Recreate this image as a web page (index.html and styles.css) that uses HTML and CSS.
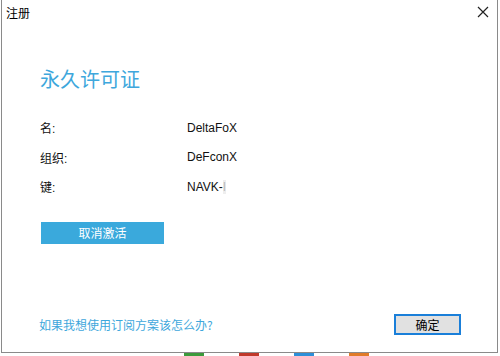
FILE: index.html
```html
<!DOCTYPE html>
<html lang="zh-CN">
<head>
    <meta charset="UTF-8">
    <title>注册</title>
    <link rel="stylesheet" href="styles.css">
</head>
<body>
    <div class="window">
        <div class="title-bar">
            <span class="title">注册</span>
            <svg class="close" width="12" height="12" viewBox="0 0 12 12">
                <path d="M1 1 L11 11 M11 1 L1 11" stroke="#222" stroke-width="1.2" fill="none"/>
            </svg>
        </div>

        <div class="content">
            <h1 class="heading">永久许可证</h1>

            <div class="info">
                <div class="info-row">
                    <span class="label">名:</span>
                    <span class="value">DeltaFoX</span>
                </div>
                <div class="info-row">
                    <span class="label">组织:</span>
                    <span class="value">DeFconX</span>
                </div>
                <div class="info-row">
                    <span class="label">键:</span>
                    <span class="value">NAVK-<span class="masked">I</span></span>
                </div>
            </div>

            <button class="deactivate-button">取消激活</button>
        </div>

        <div class="footer">
            <a class="subscription-link" href="#">如果我想使用订阅方案该怎么办?</a>
            <button class="ok-button">确定</button>
        </div>
    </div>

    <!-- Desktop behind the dialog -->
    <div class="desktop">
        <span class="icon-bit green"></span>
        <span class="icon-bit red"></span>
        <span class="icon-bit blue"></span>
        <span class="icon-bit orange"></span>
    </div>
</body>
</html>
```

FILE: styles.css
```css
body {
    margin: 0;
    background: #ffffff;
    font-family: "Liberation Sans", "Noto Sans CJK SC", sans-serif;
    font-size: 12px;
    color: #000;
    width: 500px;
    height: 356px;
    overflow: hidden;
}

/* Dialog window */
.window {
    margin-left: 1px;
    width: 495px;
    height: 352px;
    background: #ffffff;
    border: 1px solid #8a8a8a;
    border-top: none;
    display: flex;
    flex-direction: column;
}

.title-bar {
    display: flex;
    align-items: center;
    justify-content: space-between;
    height: 24px;
    padding: 0 8px 0 4px;
}

.title {
    font-size: 12px;
    color: #000;
}

.close {
    display: block;
}

.content {
    flex: 1;
    padding: 42px 0 0 38px;
}

.heading {
    margin: 0;
    font-family: "Noto Sans CJK SC", sans-serif;
    font-weight: normal;
    font-size: 20px;
    line-height: 26px;
    color: #3ea7dc;
}

.info {
    margin-top: 21px;
}

.info-row {
    display: flex;
    height: 29.5px;
    align-items: center;
}

.label {
    width: 147px;
    color: #111;
}

.value {
    color: #111;
}

.masked {
    color: #bbb;
    background: #eee;
}

.deactivate-button {
    margin: 20px 0 0 1px;
    width: 123px;
    height: 22px;
    border: none;
    background: #3aa9dc;
    color: #ffffff;
    font-family: "Noto Sans CJK SC", sans-serif;
    font-size: 12px;
    padding: 0;
}

.footer {
    display: flex;
    align-items: center;
    justify-content: space-between;
    padding: 0 36px 17px 37px;
}

.subscription-link {
    color: #3ea7dc;
    text-decoration: none;
    font-family: "Noto Sans CJK SC", sans-serif;
    font-size: 12px;
}

.ok-button {
    width: 67px;
    height: 21px;
    border: 2px solid #1a7fd9;
    background: #e1e1e1;
    font-family: "Noto Sans CJK SC", sans-serif;
    font-size: 12px;
    padding: 0;
    color: #000;
}

/* Bits of desktop icons peeking out below the dialog */
.desktop {
    position: relative;
    height: 3px;
}

.icon-bit {
    position: absolute;
    top: 0;
    width: 20px;
    height: 3px;
}

.green { left: 184px; background: #3c9a3c; }
.red { left: 239px; background: #c0392b; }
.blue { left: 294px; background: #2d8fd8; }
.orange { left: 349px; background: #e07b2a; }
```
